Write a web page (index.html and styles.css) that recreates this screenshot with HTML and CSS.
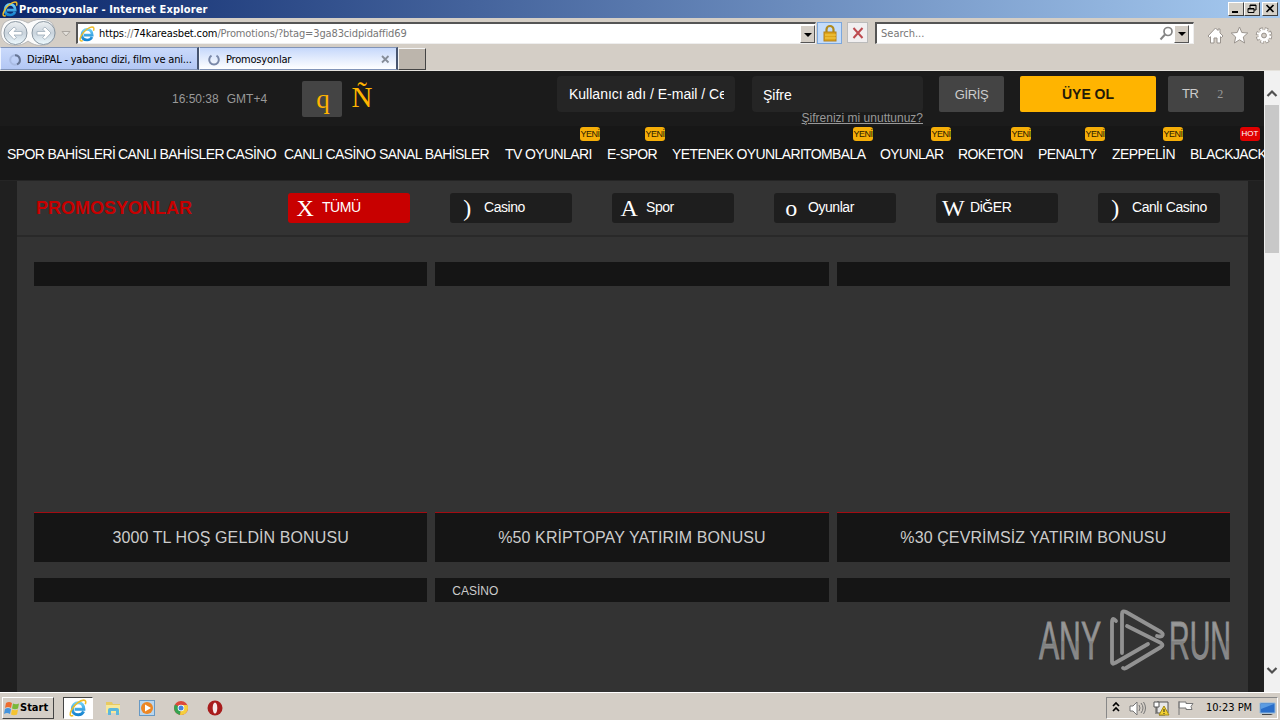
FILE: index.html
```html
<!DOCTYPE html>
<html lang="tr">
<head>
    <meta charset="UTF-8">
    <meta name="viewport" content="width=device-width, initial-scale=1.0">
    <title>Promosyonlar</title>
    <link rel="stylesheet" href="styles.css">
</head>
<body>
    <svg class="defs" width="0" height="0">
        <defs>
            <linearGradient id="blueE" x1="0" y1="0" x2="0" y2="1">
                <stop offset="0" stop-color="#6fd0f8"/><stop offset="1" stop-color="#1583cf"/>
            </linearGradient>
            <linearGradient id="round" x1="0" y1="0" x2="0" y2="1">
                <stop offset="0" stop-color="#eef1f3"/><stop offset=".5" stop-color="#c9d3dc"/><stop offset="1" stop-color="#eefaff"/>
            </linearGradient>
            <linearGradient id="mark" x1="0" y1="0" x2="0" y2="1">
                <stop offset="0" stop-color="#9c9c9c"/><stop offset=".5" stop-color="#929292"/><stop offset=".52" stop-color="#7f7f7f"/><stop offset="1" stop-color="#909090"/>
            </linearGradient>
            <symbol id="ie" viewBox="0 0 16 16">
                <path d="M13 11c-1 2-2.600 3-4.800 3C5 14 3 12 3 8.800S5.200 3.300 8.200 3.300s5 2.300 5 5.900H5" fill="none" stroke="url(#blueE)" stroke-width="2.700"/>
                <path d="M3.800 14.700C.5 16 .3 13 2.500 9.300 5 5 10 1 13 1c2 0 2.300 1.500 1.500 3.700" fill="none" stroke="#f0bd28" stroke-width="1.400"/>
            </symbol>
        </defs>
    </svg>

    <div class="titlebar">
        <svg class="icon16" viewBox="0 0 16 16"><use href="#ie"/></svg>
        <span class="window-title">Promosyonlar - Internet Explorer</span>
        <div class="window-buttons">
            <span class="win-btn"><svg width="14" height="12"><path d="M3 9h6" stroke="#000" stroke-width="2"/></svg></span>
            <span class="win-btn"><svg width="14" height="12"><path d="M5 5V2h6v5H9M5 2.500h6M3 5.500h6v4H3zM3 6h6" fill="none" stroke="#000"/></svg></span>
            <span class="win-btn close"><svg width="14" height="12"><path d="M3.500 2l7 7m0-7l-7 7" stroke="#000" stroke-width="1.700"/></svg></span>
        </div>
    </div>

    <div class="toolbar">
        <svg class="nav-buttons" width="75" height="28" viewBox="0 0 75 28">
            <path d="M4 5c7-6 17-4 24 0 7-4 17-6 24 0 5 8 4 17-4 21-8 3-15 1-20-3-5 4-12 6-20 3-8-4-9-13-4-21z" fill="#fbfbfb" stroke="#b8b8b8"/>
            <circle cx="15.500" cy="15" r="11.500" fill="url(#round)" stroke="#8b98a3"/>
            <circle cx="43.500" cy="15" r="11.500" fill="url(#round)" stroke="#8b98a3"/>
            <path d="M8 15l6-6 2.500 2-2.500 2.500h8v3.500h-8l2.500 2.500-2.500 2z" fill="#fff" stroke="#9eadba" stroke-width=".8"/>
            <path d="M51 15l-6-6-2.500 2 2.500 2.500h-8v3.500h8l-2.500 2.500 2.500 2z" fill="#fff" stroke="#9eadba" stroke-width=".8"/>
            <path d="M62 13.500h8l-4 4.500z" fill="#e4e1dc" stroke="#aaa59f"/>
        </svg>
        <div class="address">
            <svg class="icon16" viewBox="0 0 16 16"><use href="#ie"/></svg>
            <span class="url">https<i>://</i>74kareasbet.com<i>/Promotions/?btag=3ga83cidpidaffid69</i></span>
            <span class="drop"><svg width="14" height="17"><path d="M3 7h8l-4 4z"/></svg></span>
        </div>
        <span class="lock"><svg width="25" height="21"><path d="M8.500 11V6.500a3.500 3.500 0 0 1 7 0V11" fill="none" stroke="#b08a1d" stroke-width="2.200"/><rect x="6" y="9" width="12" height="9" fill="#dfa51a" stroke="#b3801a"/><path d="M7 12h11M7 15h11" stroke="#f5cf50"/></svg></span>
        <span class="stop"><svg width="20" height="20"><path d="M5.500 5l9 10m0-10l-9 10" stroke="#bd4b50" stroke-width="2"/></svg></span>
        <div class="search">
            <span>Search...</span>
            <svg width="15" height="15"><circle cx="9" cy="5.500" r="4" fill="#fff" stroke="#858585" stroke-width="1.700"/><path d="M6 8.500l-4.500 5" stroke="#858585" stroke-width="2"/></svg>
            <span class="drop"><svg width="14" height="17"><path d="M3 6h8l-4 4z"/></svg></span>
        </div>
        <svg class="tools" width="70" height="20" fill="#fff" stroke="#99938d">
            <path d="M1 11l7.500-8 2.500 2.500V4h2v4l3 3-1.500 1.500-1-.8V18h-3.500v-5h-3v5H3.500v-6.300l-1 .8z"/>
            <path d="M32.500 2l2.300 5.500 6 .5-4.500 4 1.300 6-5.100-3.200-5.100 3.200 1.300-6-4.500-4 6-.5z"/>
            <circle cx="57" cy="10.500" r="6" fill="none" stroke-width="4.600" stroke-dasharray="3 1.712"/>
            <circle cx="57" cy="10.500" r="6" fill="none" stroke="#fff" stroke-width="2.800" stroke-dasharray="2 2.712" stroke-dashoffset="-.5"/>
            <circle cx="57" cy="10.500" r="4" fill="none" stroke="#fff" stroke-width="3"/><circle cx="57" cy="10.500" r="2.400" fill="#d4cec6"/>
        </svg>
    </div>

    <div class="tabs">
        <div class="tab">
            <svg width="14" height="14"><circle cx="7" cy="7" r="4.800" fill="none" stroke="#a9bbe2" stroke-width="2"/><path d="M7 2.200A4.800 4.800 0 0 1 9 11.400" fill="none" stroke="#667594" stroke-width="2"/></svg>
            <span>DiziPAL - yabancı dizi, film ve ani...</span>
        </div>
        <div class="tab active">
            <svg width="14" height="14"><path d="M4.500 2.700A4.800 4.800 0 1 0 9.500 2.700" fill="none" stroke="#7a88a8" stroke-width="2"/></svg>
            <span>Promosyonlar</span>
            <svg class="tab-close" width="9" height="9"><path d="M1 1l6.500 6.500m0-6.500L1 7.500" stroke="#868d98" stroke-width="1.800"/></svg>
        </div>
        <div class="new-tab"></div>
    </div>

    <div class="viewport">
        <div class="page">
            <header class="header">
                <div class="clock"><span>16:50:38</span><span>GMT+4</span></div>
                <span class="glyph boxed">q</span>
                <span class="glyph">Ñ</span>
                <div class="field user"><span>Kullanıcı adı / E-mail / Cep</span></div>
                <div class="field pass"><span>Şifre</span><a class="forgot">Şifrenizi mi unuttunuz?</a></div>
                <button class="btn login">GİRİŞ</button>
                <button class="btn signup">ÜYE OL</button>
                <div class="btn lang"><span>TR</span><span class="arrow">2</span></div>
            </header>

            <nav class="menu">
                <a><span>SPOR BAHİSLERİ</span></a>
                <a><span>CANLI BAHİSLER</span></a>
                <a><span>CASİNO</span></a>
                <a><span>CANLI CASİNO</span></a>
                <a><span>SANAL BAHİSLER</span></a>
                <a><span>TV OYUNLARI</span><b class="badge">YENİ</b></a>
                <a><span>E-SPOR</span><b class="badge">YENİ</b></a>
                <a><span>YETENEK OYUNLARI</span></a>
                <a><span>TOMBALA</span><b class="badge">YENİ</b></a>
                <a><span>OYUNLAR</span><b class="badge">YENİ</b></a>
                <a><span>ROKETON</span><b class="badge">YENİ</b></a>
                <a><span>PENALTY</span><b class="badge">YENİ</b></a>
                <a><span>ZEPPELİN</span><b class="badge">YENİ</b></a>
                <a><span>BLACKJACK</span><b class="badge hot">HOT</b></a>
            </nav>

            <main class="content">
                <div class="filters">
                    <h1>PROMOSYONLAR</h1>
                    <a class="filter selected"><i>X</i>TÜMÜ</a>
                    <a class="filter"><i>)</i>Casino</a>
                    <a class="filter"><i>A</i>Spor</a>
                    <a class="filter"><i>o</i>Oyunlar</a>
                    <a class="filter"><i>W</i>DiĞER</a>
                    <a class="filter"><i>)</i>Canlı Casino</a>
                </div>
                <div class="promos">
                    <article class="promo"><div class="category"></div><h2>3000 TL HOŞ GELDİN BONUSU</h2></article>
                    <article class="promo"><div class="category"></div><h2>%50 KRİPTOPAY YATIRIM BONUSU</h2></article>
                    <article class="promo"><div class="category"></div><h2>%30 ÇEVRİMSİZ YATIRIM BONUSU</h2></article>
                    <article class="promo"><div class="category"></div></article>
                    <article class="promo"><div class="category">CASİNO</div></article>
                    <article class="promo"><div class="category"></div></article>
                </div>
            </main>
        </div>
        <div class="scrollbar">
            <svg width="16" height="34"><path d="M3.500 25l4.500-4.500 4.500 4.500" fill="none" stroke="#505050" stroke-width="2.200"/></svg>
            <div class="thumb"></div>
            <svg class="down" width="16" height="34"><path d="M3.500 10l4.500 4.500 4.500-4.500" fill="none" stroke="#505050" stroke-width="2.200"/></svg>
        </div>
        <svg class="watermark" width="200" height="66" viewBox="0 0 200 66">
            <g fill="url(#mark)" stroke="#8f8f8f" stroke-width=".9" font-family="'Liberation Sans Narrow', 'Liberation Sans', sans-serif" font-size="53">
                <text x="4" y="51" textLength="62" lengthAdjust="spacingAndGlyphs">ANY</text>
                <text x="134" y="51" textLength="62" lengthAdjust="spacingAndGlyphs">RUN</text>
            </g>
            <g fill="none" stroke="#929292" stroke-width="3.800" stroke-linejoin="round" stroke-linecap="round">
                <path d="M81 13q-4-5-4 2v39q0 3 3 1l33-19"/>
                <path d="M87 45V6q0-4 4-2l35 20q3 2 1 4-2 1-5 0"/>
                <path d="M92 18l34 17q3 2 0 4L91 60q-2 1-3 0"/>
            </g>
        </svg>
    </div>

    <div class="taskbar">
        <div class="start">
            <svg width="17" height="16"><path d="M3 3q3-2 6 0L8 8Q5 6 2 8z" fill="#ed6c2e"/><path d="M10 3.500q3 1.500 6 0l-1 5q-3 1.500-6 0z" fill="#79b838"/><path d="M2 9q3-2 6 0l-1 5q-3-2-6 0z" fill="#4594dd"/><path d="M9 9.500q3 1.500 6 0l-1 5q-3 1.500-6 0z" fill="#f5c431"/></svg>
            <span>Start</span>
        </div>
        <div class="task-active"><svg width="18" height="18" viewBox="0 0 16 16"><use href="#ie"/></svg></div>
        <svg class="launch" width="18" height="18"><path d="M2 3h6l1 2h7v8H2z" fill="#e8ca61"/><path d="M2 6h14v8H2z" fill="#f7e89a"/><path d="M4 16v-5q0-2 2-2h7q2 0 2 2v5h-3v-4H7v4z" fill="#5cb8dc"/></svg>
        <svg class="launch" width="18" height="18"><rect x="1.500" y="1.500" width="15" height="15" fill="#b9d6ee" stroke="#6799c4"/><circle cx="9" cy="9" r="6" fill="#ed8724"/><path d="M7 5.500l6 3.500-6 3.500z" fill="#fff"/></svg>
        <svg class="launch" width="18" height="18"><circle cx="9" cy="9" r="7" fill="#dc493b"/><path d="M9 9L3 5.500a7 7 0 0 0 5 10.400z" fill="#35a350"/><path d="M9 9h7a7 7 0 0 1-8 6.900z" fill="#f5cf3d"/><path d="M9 6h6.400q.6 1.400.6 3H9z" fill="#f5cf3d"/><circle cx="9" cy="9" r="3.300" fill="#fff"/><circle cx="9" cy="9" r="2.500" fill="#4682dc"/></svg>
        <svg class="launch" width="18" height="18"><circle cx="9" cy="9" r="7.500" fill="#a81c1c"/><ellipse cx="9" cy="9" rx="2.300" ry="5.500" fill="#f6eaea"/></svg>
        <div class="tray">
            <svg width="95" height="22">
                <path d="M6 9l3-3 3 3M6 14l3-3 3 3" fill="none" stroke="#000" stroke-width="1.700"/>
                <path d="M23 9h3l4-4v13l-4-4h-3z" fill="#fff" stroke="#777"/><path d="M32 8q2 3 0 6M34 6q4 5 0 10M36.500 5q4 6 0 12" fill="none" stroke="#777"/>
                <path d="M50 5h11v11H50z" fill="#e8e8e8" stroke="#555"/><path d="M47 5h5v5h-5zM49 10v7M52 18h6" fill="#fff" stroke="#555"/><path d="M57 9l5 9H52z" fill="#f3d130" stroke="#a48a15"/><path d="M57 12v3m0 1v1" stroke="#222"/>
                <path d="M72 4v14M72 5h7v1.500h7l-2 3 1 3h-6V11h-7z" fill="#fff" stroke="#777"/>
            </svg>
            <span class="time">10:23 PM</span>
            <svg width="18" height="18"><path d="M1 4h15v10H1z" fill="#2a6ec9" stroke="#8eb8dd"/><path d="M2 5h13L2 10z" fill="#5b9ce2"/><path d="M3 15h9l2 1H3z" fill="#444"/></svg>
        </div>
    </div>
</body>
</html>
```
FILE: styles.css
```css
* {
    box-sizing: border-box;
}

body {
    margin: 0;
    width: 1280px;
    height: 720px;
    overflow: hidden;
    display: flex;
    flex-direction: column;
    background-color: #d4cec6;
    font-family: "DejaVu Sans Condensed", "DejaVu Sans", sans-serif;
    font-size: 11px;
    color: #000;
}

svg {
    display: block;
    flex: none;
}

span {
    white-space: nowrap;
}

.defs {
    position: absolute;
}

.icon16 {
    width: 16px;
    height: 16px;
}

/* browser window */
.titlebar {
    height: 18px;
    display: flex;
    align-items: center;
    padding: 0 2px;
    background: linear-gradient(to right, #0b276b, #a6caf0);
}

.window-title {
    margin-left: 1px;
    color: white;
    font-weight: bold;
    letter-spacing: 0.14px;
}

.window-buttons {
    display: flex;
    margin-left: auto;
}

.win-btn {
    width: 16px;
    height: 14px;
    background-color: #d4d0c8;
    border: 1px solid;
    border-color: #fff #404040 #404040 #fff;
}

.close {
    margin-left: 2px;
}

.toolbar {
    height: 29px;
    display: flex;
    align-items: flex-start;
}

.address {
    width: 740px;
    height: 22px;
    margin: 4px 0 0 1px;
    padding-left: 1px;
    display: flex;
    align-items: center;
    background-color: white;
    border: 1px solid;
    border-width: 2px 1px 1px 2px;
    border-color: #555 #eee #eee #555;
}

.url {
    margin-left: 4px;
    letter-spacing: -0.13px;
}

.url i {
    font-style: normal;
    color: #777;
}

.drop {
    width: 15px;
    height: 18px;
    margin-left: auto;
    background-color: #d4cec6;
    border: 1px solid;
    border-color: #fff #555 #555 #fff;
}

.lock {
    width: 25px;
    height: 22px;
    margin: 4px 0 0 1px;
    background-color: #c4dcfa;
    border: 1px solid #7ba7dd;
}

.stop {
    width: 21px;
    height: 21px;
    margin: 4px 0 0 5px;
    background-color: #f1eff0;
    border: 1px solid #bbb;
}

.search {
    width: 319px;
    height: 22px;
    margin: 4px 0 0 7px;
    padding: 0 4px 0 4px;
    display: flex;
    align-items: center;
    background: white;
    border: 1px solid;
    border-width: 2px 1px 1px 2px;
    border-color: #555 #eee #eee #555;
    color: #777;
}

.search svg {
    margin-left: auto;
}

.search .drop, .search .drop svg {
    margin-left: 0;
}

.tools {
    margin: 7px 0 0 13px;
}

.tabs {
    height: 24px;
    display: flex;
    border-bottom: 1px solid #e5e2dc;
}

.tab {
    width: 199px;
    height: 23px;
    display: flex;
    align-items: center;
    padding: 2px 6px 0 7px;
    border: 1px solid #8194b8;
    border-right: 2px solid #46546f;
    border-left-color: #eef4ff;
    background: linear-gradient(#cadafb, #b3c7f4);
    letter-spacing: -0.2px;
}

.tab span {
    margin-left: 5px;
}

.tab.active {
    background: linear-gradient(#c6d8fb, #fff);
}

.tab-close {
    margin-left: auto;
}

.new-tab {
    width: 28px;
    height: 22px;
    margin-top: 1px;
    background-color: #bcb5ac;
    border: 1px solid;
    border-color: #f3f3f3 #444 #444 #f3f3f3;
}

/* site */
.viewport {
    height: 621px;
    display: flex;
    position: relative;
}

.page {
    width: 1264px;
    overflow: hidden;
    background-color: #202020;
    font-family: "Liberation Sans", Arial, sans-serif;
}

.header {
    height: 55px;
    display: flex;
    background-color: #1b1b1b;
    padding-top: 5px;
}

.clock {
    width: 130px;
    margin-left: 172px;
    line-height: 46px;
    font-size: 12px;
    color: #999;
}

.clock span + span {
    margin-left: 8px;
}

.glyph {
    width: 40px;
    height: 36px;
    margin-top: 5px;
    font: 29px/32px "Liberation Serif", serif;
    color: #ffb400;
    text-align: center;
}

.glyph.boxed {
    background-color: #444;
    border-radius: 2px;
    padding-left: 2px;
    font-size: 27px;
    line-height: 36px;
}

.field {
    height: 36px;
    background-color: #252525;
    border-radius: 4px;
    color: white;
    font-size: 14px;
    line-height: 36px;
}

.user {
    width: 178px;
    margin-left: 175px;
    padding: 0 11px 0 12px;
}

.user span {
    display: block;
    overflow: hidden;
}

.pass {
    position: relative;
    width: 171px;
    margin-left: 17px;
    padding-left: 11px;
    line-height: 38px;
}

.forgot {
    position: absolute;
    right: 0;
    top: 35px;
    font-size: 12px;
    line-height: 14px;
    color: #999;
    text-decoration: underline;
    white-space: nowrap;
}

.btn {
    height: 36px;
    border: none;
    border-radius: 2px;
    background-color: #444;
    color: #ccc;
    font-family: inherit;
    font-size: 13px;
    padding: 0;
}

.login {
    width: 65px;
    margin-left: 16px;
    letter-spacing: -0.4px;
}

.signup {
    width: 136px;
    margin-left: 16px;
    background-color: #ffb400;
    color: #231a08;
    font-size: 14px;
    font-weight: bold;
}

.lang {
    width: 76px;
    margin-left: 12px;
    padding-left: 14px;
    line-height: 35px;
    letter-spacing: -0.5px;
}

.arrow {
    margin-left: 19px;
    font: 12px "Liberation Serif", serif;
    color: #999;
}

.menu {
    height: 55px;
    padding-left: 7px;
    display: grid;
    grid-template-columns: 111px 108px 58px 95px 126px 102px 65px 131px 77px 78px 80px 74px 78px 77px;
    background-color: #171717;
    border-bottom: 1px solid #252525;
    color: white;
    font-size: 14px;
    line-height: 56px;
    letter-spacing: -0.6px;
}

.menu a {
    position: relative;
}

.badge {
    position: absolute;
    right: 7px;
    top: 1px;
    width: 20px;
    height: 14px;
    border-radius: 3px;
    background-color: #f5ae08;
    color: #2a1b00;
    font-size: 9px;
    font-weight: normal;
    line-height: 14px;
    letter-spacing: -0.5px;
    text-align: center;
}

.badge.hot {
    background-color: #e00000;
    color: white;
    font-size: 8px;
    letter-spacing: 0;
}

.content {
    height: 511px;
    margin: 0 16px 0 17px;
    background-color: #333;
}

.filters {
    height: 56px;
    display: flex;
    padding: 12px 0 0 19px;
    border-bottom: 2px solid #292929;
}

h1 {
    flex: none;
    width: 252px;
    margin: 0;
    color: #c80000;
    font-size: 18px;
    line-height: 30px;
}

.filter {
    flex: none;
    width: 122px;
    height: 30px;
    margin-right: 40px;
    display: flex;
    border-radius: 3px;
    background-color: #1e1e1e;
    color: white;
    font-size: 14px;
    line-height: 29px;
    letter-spacing: -0.45px;
}

.filter i {
    width: 34px;
    font: 24px/30px "Liberation Serif", serif;
    text-align: center;
}

.filter.selected {
    background-color: #c80000;
}

.promos {
    display: grid;
    grid-template-columns: repeat(3, 1fr);
    grid-template-rows: 300px 100px;
    gap: 16px 8px;
    padding: 25px 18px 0 17px;
}

.promo {
    display: flex;
    flex-direction: column;
    justify-content: space-between;
}

.category {
    height: 24px;
    padding-left: 17px;
    background-color: #151515;
    color: #ccc;
    font-size: 12px;
    line-height: 26px;
}

h2 {
    height: 50px;
    margin: 0;
    background-color: #151515;
    border-top: 1px solid #a20c12;
    color: #ccc;
    font-size: 16px;
    font-weight: normal;
    line-height: 49px;
    letter-spacing: 0.1px;
    text-align: center;
}

.scrollbar {
    width: 16px;
    display: flex;
    flex-direction: column;
    background-color: #f1f1f1;
}

.thumb {
    height: 148px;
    margin: 0 1px;
    background-color: #c8c8c8;
}

.down {
    margin-top: auto;
}

.watermark {
    position: absolute;
    left: 1035px;
    top: 537px;
}

/* taskbar */
.taskbar {
    height: 28px;
    display: flex;
    align-items: center;
    border-top: 1px solid #fff;
    padding: 2px 2px 0;
}

.start {
    width: 52px;
    height: 22px;
    display: flex;
    align-items: center;
    border: 1px solid;
    border-color: #fff #444 #444 #fff;
    font-weight: bold;
}

.task-active {
    width: 30px;
    height: 22px;
    margin: 0 11px 0 9px;
    padding: 1px 5px;
    background-color: white;
    border: 1px solid;
    border-color: #444 #fff #fff #444;
}

.launch {
    margin-right: 16px;
}

.tray {
    width: 172px;
    height: 22px;
    display: flex;
    align-items: center;
    margin-left: auto;
    border: 1px solid;
    border-color: #888 #fff #fff #888;
}

.time {
    width: 57px;
    margin-left: 4px;
}
```
